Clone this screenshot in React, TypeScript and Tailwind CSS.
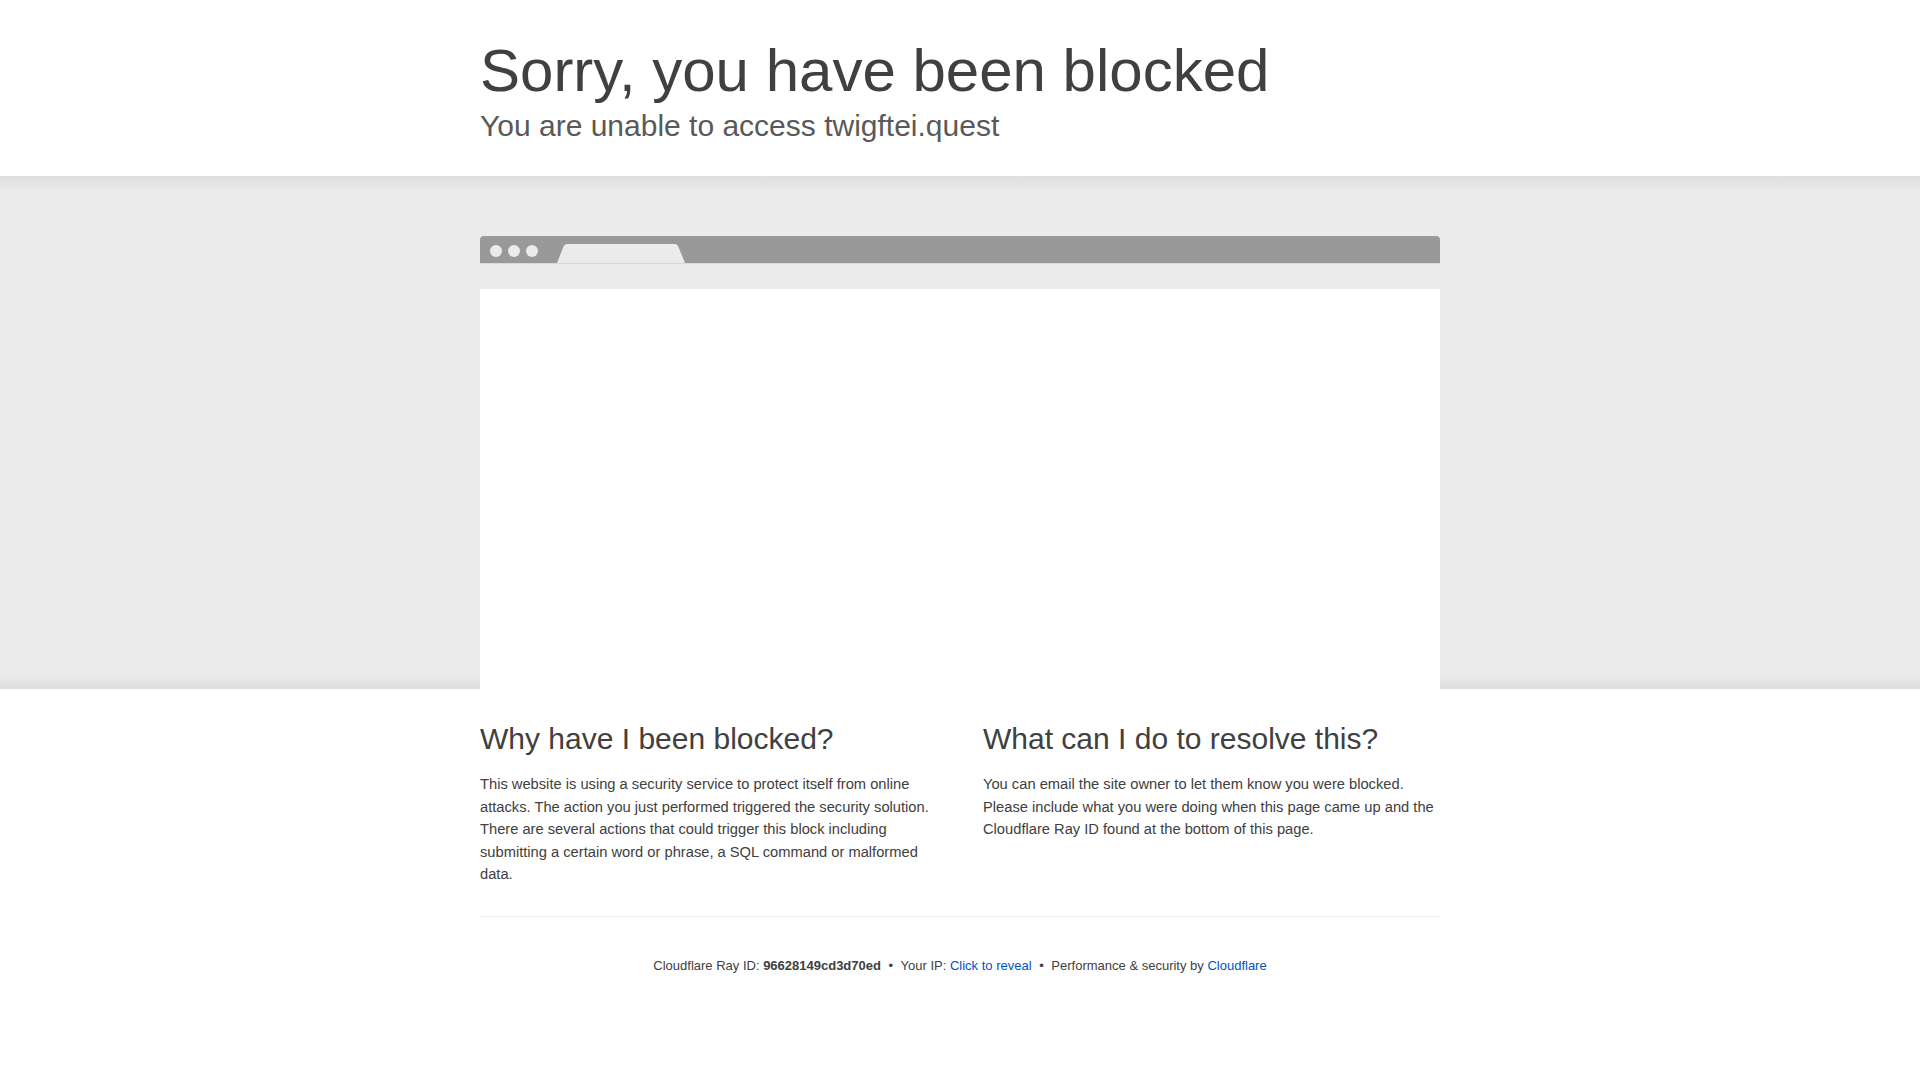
export default function App() {
  return (
    <div className="min-h-screen bg-white text-[#404040] font-['Liberation_Sans',Arial,sans-serif]">
      {/* Header */}
      <header className="mx-auto w-[960px] pt-[38px] pb-[31px]">
        <h1 className="text-[60px] leading-[66px] font-normal">Sorry, you have been blocked</h1>
        <h2 className="mt-[2px] text-[30px] leading-[39px] font-normal text-[#595959]">
          You are unable to access twigftei.quest
        </h2>
      </header>

      {/* Screenshot band */}
      <section className="bg-[#ebebeb] bg-[linear-gradient(to_bottom,#dedede,#ebebeb_3%,#ebebeb_97%,#dedede)] pt-[60px]">
        <div className="mx-auto w-[960px] h-[453px] overflow-hidden flex flex-col">
          <div className="h-[28px] rounded-t-[4px] bg-[#999] border-b border-[#d9d9d9] flex items-start pl-[10px]">
            <div className="flex gap-[6px] pt-[9px]">
              <span className="w-3 h-3 rounded-full bg-[#ebebeb]"></span>
              <span className="w-3 h-3 rounded-full bg-[#ebebeb]"></span>
              <span className="w-3 h-3 rounded-full bg-[#ebebeb]"></span>
            </div>
            <svg className="ml-[19px] self-end" width="128" height="19" viewBox="0 0 128 19">
              <path d="M0 19 L6.5 2.5 Q7.5 0 10 0 L118 0 Q120.5 0 121.3 2.5 L128 19 Z" fill="#ebebeb" />
            </svg>
          </div>
          <div className="mt-[25px] h-[400px] bg-white shrink-0"></div>
        </div>
      </section>

      {/* Explanation */}
      <section className="mx-auto w-[960px] pt-[32px]">
        <div className="grid grid-cols-2 gap-x-[46px]">
          <div>
            <h2 className="text-[30px] leading-[36px] font-normal">Why have I been blocked?</h2>
            <p className="mt-[16px] text-[14.7px] leading-[22.5px]">
              This website is using a security service to protect itself from online attacks. The action you just
              performed triggered the security solution. There are several actions that could trigger this block
              including submitting a certain word or phrase, a SQL command or malformed data.
            </p>
          </div>
          <div>
            <h2 className="text-[30px] leading-[36px] font-normal">What can I do to resolve this?</h2>
            <p className="mt-[16px] text-[14.7px] leading-[22.5px]">
              You can email the site owner to let them know you were blocked. Please include what you were doing when
              this page came up and the Cloudflare Ray ID found at the bottom of this page.
            </p>
          </div>
        </div>

        <footer className="mt-[30px] border-t border-[#ebebeb] pt-[39px] pb-10 text-center text-[13px] leading-[19.5px]">
          <span>
            Cloudflare Ray ID: <strong className="font-bold">96628149cd3d70ed</strong>
          </span>{" "}
          <span className="px-1">•</span>{" "}
          <span>
            Your IP: <a className="text-[#0051c3] cursor-pointer">Click to reveal</a>
          </span>{" "}
          <span className="px-1">•</span>{" "}
          <span>
            Performance &amp; security by <a className="text-[#0051c3] cursor-pointer">Cloudflare</a>
          </span>
        </footer>
      </section>
    </div>
  )
}
